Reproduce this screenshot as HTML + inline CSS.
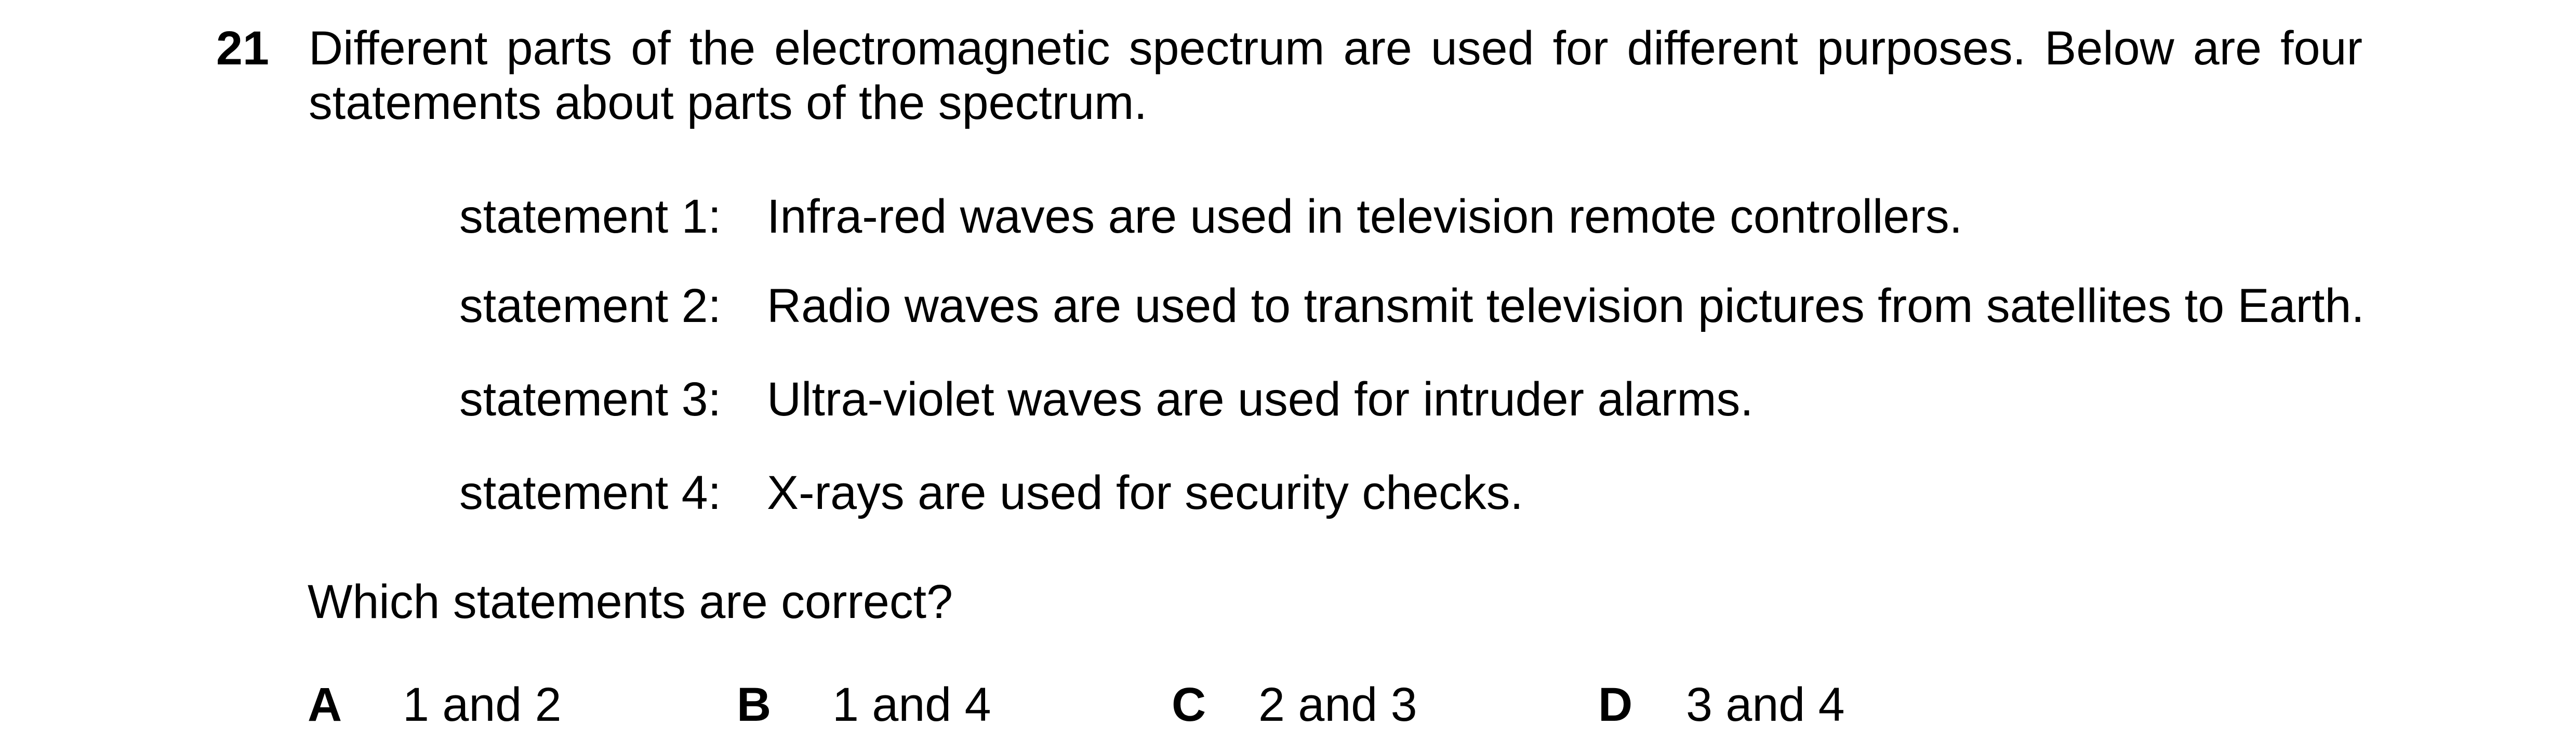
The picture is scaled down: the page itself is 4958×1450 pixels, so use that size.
<!DOCTYPE html>
<html><head><meta charset="utf-8"><style>
html,body{margin:0;padding:0;background:#fff;}
body{width:4958px;height:1450px;position:relative;overflow:hidden;font-family:"Liberation Sans",Arial,sans-serif;font-size:91.6px;line-height:89px;color:#000;}
.t{position:absolute;white-space:nowrap;}
.b{font-weight:bold;}
.j{position:absolute;left:594px;width:3953px;text-align:justify;text-align-last:justify;white-space:nowrap;}
</style></head><body>
<div class="t b" style="left:416px;top:49px;">21</div>
<div class="j" style="top:49px;">Different parts of the electromagnetic spectrum are used for different purposes. Below are four</div>
<div class="t" style="left:594px;top:154px;">statements about parts of the spectrum.</div>

<div class="t" style="left:884px;top:373px;">statement 1:</div>
<div class="t" style="left:1476px;top:373px;">Infra-red waves are used in television remote controllers.</div>
<div class="t" style="left:884px;top:545px;">statement 2:</div>
<div class="t" style="left:1476px;top:545px;">Radio waves are used to transmit television pictures from satellites to Earth.</div>
<div class="t" style="left:884px;top:725px;">statement 3:</div>
<div class="t" style="left:1476px;top:725px;">Ultra-violet waves are used for intruder alarms.</div>
<div class="t" style="left:884px;top:905px;">statement 4:</div>
<div class="t" style="left:1476px;top:905px;">X-rays are used for security checks.</div>

<div class="t" style="left:592px;top:1115px;">Which statements are correct?</div>

<div class="t b" style="left:592px;top:1313px;">A</div>
<div class="t" style="left:775px;top:1313px;">1 and 2</div>
<div class="t b" style="left:1418px;top:1313px;">B</div>
<div class="t" style="left:1602px;top:1313px;">1 and 4</div>
<div class="t b" style="left:2255px;top:1313px;">C</div>
<div class="t" style="left:2422px;top:1313px;">2 and 3</div>
<div class="t b" style="left:3076px;top:1313px;">D</div>
<div class="t" style="left:3245px;top:1313px;">3 and 4</div>
</body></html>
